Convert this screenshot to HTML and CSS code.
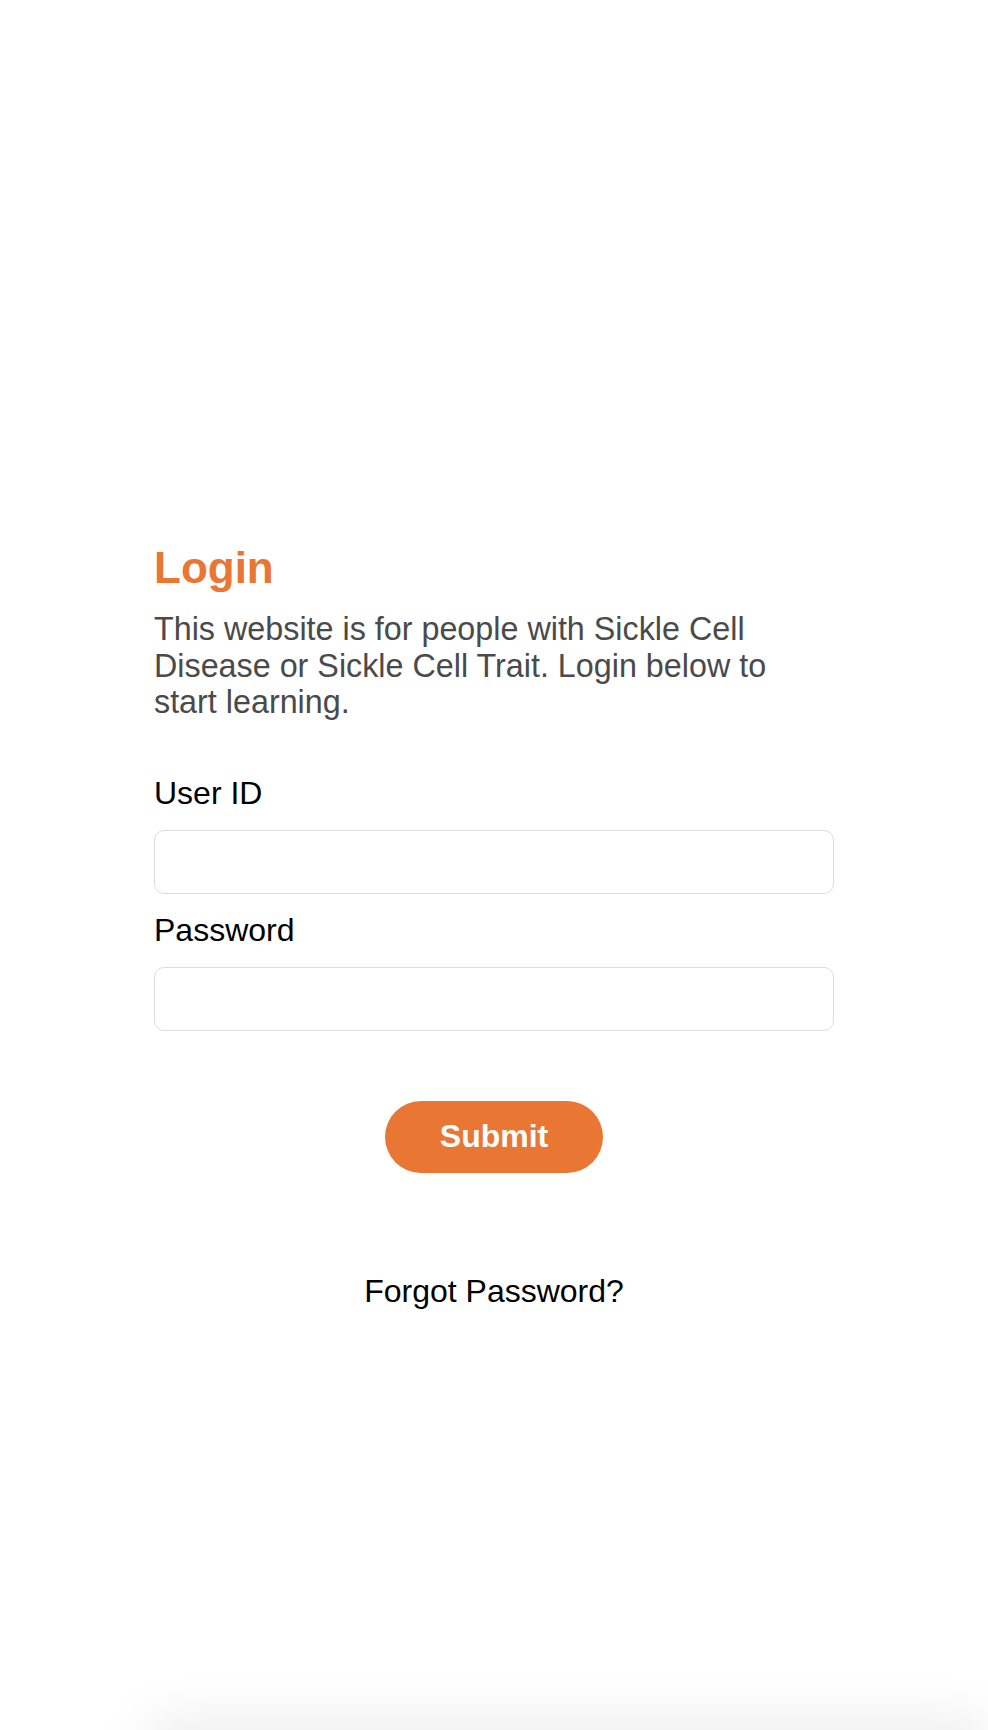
FILE: index.html
```html
<!DOCTYPE html>
<html lang="en">
<head>
<meta charset="utf-8">
<title>Login</title>
<link rel="stylesheet" href="styles.css">
</head>
<body>
<div class="page">
  <main class="login">
    <h1 class="title">Login</h1>
    <p class="intro">This website is for people with Sickle Cell Disease or Sickle Cell Trait. Login below to start learning.</p>
    <form class="form">
      <label class="label" for="uid">User ID</label>
      <input class="field" id="uid" type="text">
      <label class="label" for="pwd">Password</label>
      <input class="field" id="pwd" type="password">
      <div class="actions">
        <button class="submit" type="button">Submit</button>
      </div>
    </form>
    <div class="forgot">Forgot Password?</div>
  </main>
  <div class="spacer"></div>
  <div class="shade"><div class="shade-box"></div></div>
</div>
</body>
</html>
```

FILE: styles.css
```css
html, body {
  margin: 0;
  padding: 0;
  background: #ffffff;
}

body {
  font-family: "Liberation Sans", Arial, Helvetica, sans-serif;
}

.page {
  min-height: 1730px;
  height: 1730px;
  display: flex;
  flex-direction: column;
  overflow: hidden;
}

.login {
  width: 680px;
  margin: 0 auto;
  padding-top: 543px;
  display: flex;
  flex-direction: column;
}

.title {
  margin: 0;
  font-size: 44px;
  line-height: 50px;
  font-weight: 700;
  color: #e97632;
}

.intro {
  margin: 18px 0 0;
  max-width: 640px;
  font-size: 32.3px;
  line-height: 36.5px;
  color: #4a4a4a;
}

.form {
  display: flex;
  flex-direction: column;
  margin-top: 54px;
}

.label {
  font-size: 32px;
  line-height: 37px;
  color: #000;
}

.field {
  box-sizing: border-box;
  height: 64px;
  width: 100%;
  margin: 18px 0 18px;
  border: 1px solid #dcdcdc;
  border-radius: 10px;
  background: #fff;
  font-family: inherit;
  font-size: 28px;
  padding: 0 16px;
  outline: none;
}

.field:last-of-type {
  margin-bottom: 0;
}

.actions {
  display: flex;
  justify-content: center;
  margin-top: 70px;
}

.submit {
  width: 218px;
  height: 72px;
  border: none;
  border-radius: 36px;
  background: #e97632;
  color: #fff;
  font-family: inherit;
  font-size: 32px;
  font-weight: 700;
  cursor: pointer;
}

.forgot {
  margin-top: 100px;
  text-align: center;
  font-size: 32px;
  line-height: 37px;
  color: #000;
}

.spacer {
  flex: 1;
}

.shade {
  height: 60px;
  overflow: hidden;
  flex-shrink: 0;
}

.shade-box {
  margin-top: 60px;
  margin-left: 150px;
  height: 40px;
  box-shadow: 0 0 60px 0 rgba(0, 0, 0, 0.12);
}
```
